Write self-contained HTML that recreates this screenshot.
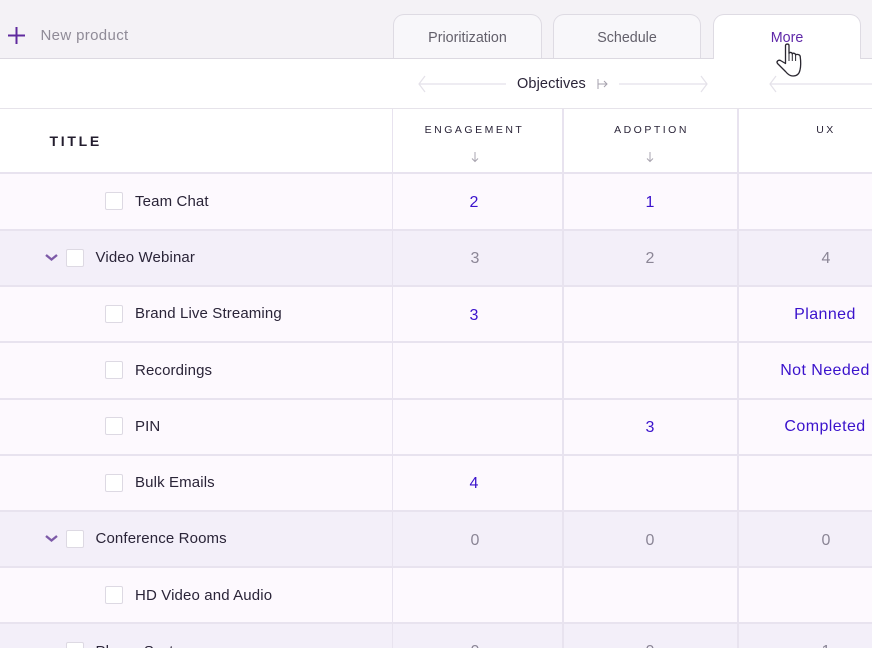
<!DOCTYPE html>
<html>
<head>
<meta charset="utf-8">
<style>
html{margin:0;padding:0;width:872px;height:648px;overflow:hidden}
body{margin:0;padding:0;width:872px;height:648px;overflow:hidden;position:relative;background:#fff;font-family:"Liberation Sans",sans-serif;color:#2a2438}
#p{position:absolute;left:0;top:0;width:872px;height:648px;overflow:hidden}
.a{position:absolute;white-space:nowrap}
.row{position:absolute;left:0;width:872px}
.l{background:#fdf9fe}
.d{background:#f3eff9}
.h{position:absolute;left:0;width:872px;height:2px;background:#e8e3ef}
.v{position:absolute;background:#e8e3ef}
.cb{position:absolute;width:16px;height:16px;background:#fff;border:1px solid #ddd9e3;border-radius:2px}
.t{position:absolute;font-size:15px;letter-spacing:.13px;line-height:18px;margin-top:2px;color:#2a2438;white-space:nowrap}
.n{position:absolute;font-size:16px;line-height:18px;margin-top:2px;text-align:center;white-space:nowrap}
.w{letter-spacing:.42px;margin-top:2px}
.b{color:#3a12cc}
.g{color:#8b8696}
.tab{position:absolute;top:14px;height:44px;box-sizing:border-box;border:1px solid #dedbe3;border-bottom:none;border-radius:11px 11px 0 0;background:#f8f7fa;text-align:center;font-size:14.3px;line-height:46px;color:#63606b}
.hd{position:absolute;font-size:10.5px;line-height:12px;letter-spacing:2.5px;text-align:center;color:#2a2438;white-space:nowrap}
</style>
</head>
<body>
<div id="p">
<!-- top bar -->
<div class="a" style="left:0;top:0;width:872px;height:58px;background:#f4f2f6"></div>
<div class="a" style="left:0;top:58px;width:872px;height:1px;background:#dcd9e1"></div>
<svg class="a" style="left:7px;top:26px" width="19" height="19" viewBox="0 0 19 19"><path d="M1 9.5H18M9.5 1V18" stroke="#5f2a9e" stroke-width="2" fill="none"/></svg>
<div class="a" style="left:40.5px;top:27px;font-size:15px;letter-spacing:.35px;line-height:18px;color:#8f8b97">New product</div>
<div class="tab" style="left:393px;width:149px">Prioritization</div>
<div class="tab" style="left:553px;width:148px">Schedule</div>
<div class="tab" style="left:713px;width:148px;height:45px;background:#fff;color:#5f28a8">More</div>

<!-- group header -->
<svg class="a" style="left:410px;top:70px" width="462" height="28" viewBox="0 0 462 28" fill="none" stroke="#e4e1e9" stroke-width="1.2">
<path d="M15 6L9 14L15 22"/><path d="M9 14H96"/>
<path d="M209 14H297"/><path d="M291 6L297 14L291 22"/>
<path d="M366 6L360 14L366 22"/><path d="M360 14H462"/>
<path d="M188 9V19M188 14H197M194 11L197 14L194 17" stroke="#a5a1ad" stroke-width="1"/>
</svg>
<div class="a" style="left:517px;top:75px;font-size:14.5px;letter-spacing:.12px;line-height:18px;color:#2a2438">Objectives</div>

<!-- header row -->
<div class="a" style="left:0;top:108px;width:872px;height:1px;background:#e6e3ea"></div>
<div class="a" style="left:49.5px;top:132px;font-size:14px;line-height:18px;font-weight:bold;letter-spacing:2.7px;color:#231d2e">TITLE</div>
<div class="hd" style="left:393px;width:163px;top:124px">ENGAGEMENT</div>
<div class="hd" style="left:565px;width:173px;top:124px">ADOPTION</div>
<div class="hd" style="left:740px;width:172px;top:124px">UX</div>
<svg class="a" style="left:470px;top:151px" width="10" height="12" viewBox="0 0 10 12" fill="none" stroke="#a9a5b0" stroke-width="1"><path d="M5 1V10.5M2 7.5L5 10.5L8 7.5"/></svg>
<svg class="a" style="left:645px;top:151px" width="10" height="12" viewBox="0 0 10 12" fill="none" stroke="#a9a5b0" stroke-width="1"><path d="M5 1V10.5M2 7.5L5 10.5L8 7.5"/></svg>

<!-- rows -->
<div class="row l" style="top:173px;height:57px"></div>
<div class="row d" style="top:230px;height:56px"></div>
<div class="row l" style="top:286px;height:225px"></div>
<div class="row d" style="top:511px;height:56px"></div>
<div class="row l" style="top:567px;height:56px"></div>
<div class="row d" style="top:623px;height:25px"></div>

<div class="h" style="top:172px"></div>
<div class="h" style="top:229px"></div>
<div class="h" style="top:285px"></div>
<div class="h" style="top:341px"></div>
<div class="h" style="top:398px"></div>
<div class="h" style="top:454px"></div>
<div class="h" style="top:510px"></div>
<div class="h" style="top:566px"></div>
<div class="h" style="top:622px"></div>

<div class="v" style="left:392px;top:109px;width:1px;height:539px"></div>
<div class="v" style="left:562px;top:109px;width:2px;height:539px"></div>
<div class="v" style="left:737px;top:109px;width:2px;height:539px"></div>

<!-- checkboxes -->
<div class="cb" style="left:105px;top:192px"></div>
<div class="cb" style="left:66px;top:249px"></div>
<div class="cb" style="left:105px;top:305px"></div>
<div class="cb" style="left:105px;top:361px"></div>
<div class="cb" style="left:105px;top:417px"></div>
<div class="cb" style="left:105px;top:474px"></div>
<div class="cb" style="left:66px;top:530px"></div>
<div class="cb" style="left:105px;top:586px"></div>
<div class="cb" style="left:66px;top:642px"></div>

<!-- chevrons -->
<svg class="a" style="left:44px;top:252px" width="15" height="11" viewBox="0 0 15 11" fill="none" stroke="#7d5aa8" stroke-width="2.4"><path d="M2 3L7.5 7.5L13 3"/></svg>
<svg class="a" style="left:44px;top:533px" width="15" height="11" viewBox="0 0 15 11" fill="none" stroke="#7d5aa8" stroke-width="2.4"><path d="M2 3L7.5 7.5L13 3"/></svg>

<!-- titles -->
<div class="t" style="left:135px;top:191px">Team Chat</div>
<div class="t" style="left:95.5px;top:247px">Video Webinar</div>
<div class="t" style="left:135px;top:303px">Brand Live Streaming</div>
<div class="t" style="left:135px;top:360px">Recordings</div>
<div class="t" style="left:135px;top:416px">PIN</div>
<div class="t" style="left:135px;top:472px">Bulk Emails</div>
<div class="t" style="left:95.5px;top:528px">Conference Rooms</div>
<div class="t" style="left:135px;top:585px">HD Video and Audio</div>
<div class="t" style="left:95.5px;top:641px">Phone Systems</div>

<!-- values -->
<div class="n b" style="left:424px;width:100px;top:192px">2</div>
<div class="n b" style="left:600px;width:100px;top:192px">1</div>
<div class="n g" style="left:425px;width:100px;top:248px">3</div>
<div class="n g" style="left:600px;width:100px;top:248px">2</div>
<div class="n g" style="left:776px;width:100px;top:248px">4</div>
<div class="n b" style="left:424px;width:100px;top:305px">3</div>
<div class="n b w" style="left:765px;width:120px;top:304px">Planned</div>
<div class="n b w" style="left:765px;width:120px;top:360px">Not Needed</div>
<div class="n b" style="left:600px;width:100px;top:417px">3</div>
<div class="n b w" style="left:765px;width:120px;top:416px">Completed</div>
<div class="n b" style="left:424px;width:100px;top:473px">4</div>
<div class="n g" style="left:425px;width:100px;top:530px">0</div>
<div class="n g" style="left:600px;width:100px;top:530px">0</div>
<div class="n g" style="left:776px;width:100px;top:530px">0</div>
<div class="n g" style="left:425px;width:100px;top:641px">0</div>
<div class="n g" style="left:600px;width:100px;top:641px">0</div>
<div class="n g" style="left:776px;width:100px;top:641px">1</div>

<!-- cursor -->
<svg class="a" style="left:775px;top:42px" width="28" height="36" viewBox="0 0 28 36">
<path d="M10.5 3.5C10.5 1.6 14 1.6 14 3.5V11.5C14.5 10 17 10 17.3 12C17.8 10.8 20.3 10.8 20.6 13C21.2 12 25 12.3 25.2 14.5C25.8 19 26 24 25 28C24.2 32 21.5 34 18 34C14.5 34 12.5 32 10.5 29.5C8.5 27.5 4.5 23.5 2.5 21.5C1 19.5 3.5 17.5 5.5 18.5L10.5 21.5Z" fill="#fff" stroke="#2a2730" stroke-width="1.3" stroke-linejoin="round"/>
<path d="M14 11.5V19M17.3 12V19M20.6 13V19" stroke="#2a2730" stroke-width="1" fill="none"/>
</svg>
</div>
</body>
</html>
